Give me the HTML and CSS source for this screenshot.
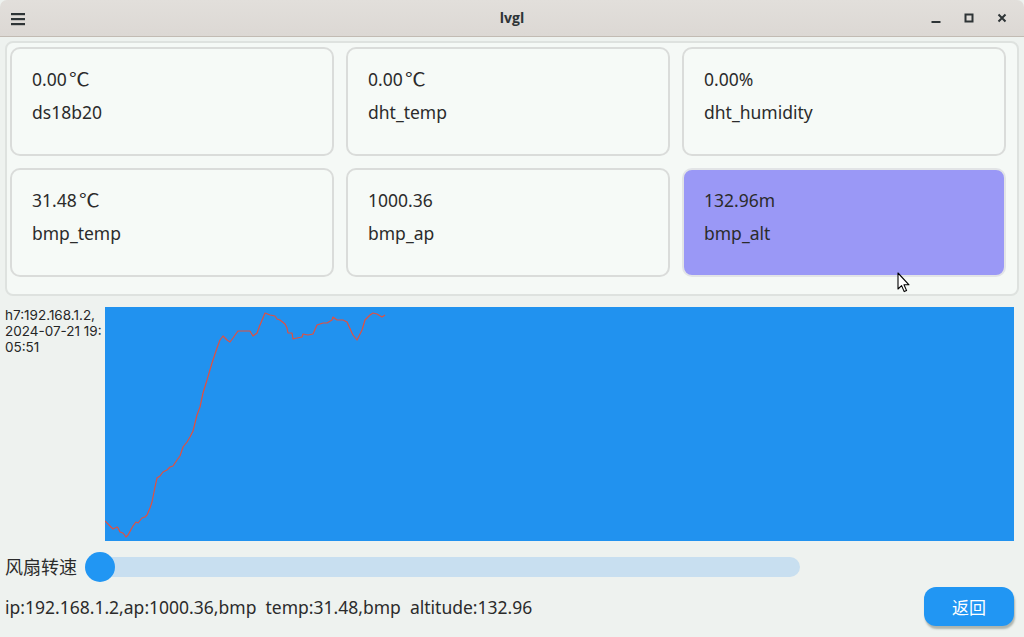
FILE: index.html
```html
<!DOCTYPE html>
<html lang="zh">
<head>
<meta charset="utf-8">
<title>lvgl</title>
<link rel="stylesheet" href="styles.css">
</head>
<body>
<div class="window">
  <header class="titlebar">
    <div class="tb-left">
      <svg class="icon" width="16" height="16" viewBox="0 0 16 16"><rect x="1" y="2" width="14" height="2.2" fill="#2e3436"/><rect x="1" y="7" width="14" height="2.2" fill="#2e3436"/><rect x="1" y="12" width="14" height="2.2" fill="#2e3436"/></svg>
    </div>
    <div class="tb-title">lvgl</div>
    <div class="tb-right">
      <svg class="ctl" width="16" height="16" viewBox="0 0 16 16"><rect x="3.5" y="11" width="9" height="2" fill="#2e3436"/></svg>
      <svg class="ctl" width="16" height="16" viewBox="0 0 16 16"><rect x="4.5" y="4.5" width="7" height="7" fill="none" stroke="#2e3436" stroke-width="2"/></svg>
      <svg class="ctl" width="16" height="16" viewBox="0 0 16 16"><path d="M4.5 4.5 L11.5 11.5 M11.5 4.5 L4.5 11.5" stroke="#2e3436" stroke-width="2"/></svg>
    </div>
  </header>
  <main class="content">
    <section class="panel">
      <div class="card"><div class="val">0.00<span class="unit">℃</span></div><div class="lbl">ds18b20</div></div>
      <div class="card"><div class="val">0.00<span class="unit">℃</span></div><div class="lbl">dht_temp</div></div>
      <div class="card"><div class="val">0.00%</div><div class="lbl">dht_humidity</div></div>
      <div class="card"><div class="val">31.48<span class="unit">℃</span></div><div class="lbl">bmp_temp</div></div>
      <div class="card"><div class="val">1000.36</div><div class="lbl">bmp_ap</div></div>
      <div class="card card-active"><div class="val">132.96m</div><div class="lbl">bmp_alt</div></div>
    </section>
    <section class="chart-row">
      <div class="chart-label">h7:192.168.1.2,<br>2024-07-21 19:<br>05:51</div>
      <div class="chart">
        <svg width="909" height="234" viewBox="105 307 909 234">
          <polyline fill="none" stroke="#e2503f" stroke-width="1.2" stroke-linejoin="round" points="105,521 110,526 113,529 117,527 118,528 120,532 123,533 126,537 128,535 133,526 136,522 138,523 142,518 145,517 147,515 150,508 152,502 155,487 157,478 160,476 163,472 167,470 170,467 173,466 177,460 180,456 183,447 187,442 190,437 193,431 197,415 200,407 203,393 207,380 212,363 217,348 220,340 223,336 227,340 230,342 233,338 238,331 250,331 253,336 257,333 260,325 265,313 270,315 275,316 277,319 280,320 285,324 287,328 288,333 292,333 293,339 297,338 302,337 303,334 308,335 313,334 317,325 323,323 327,323 332,320 333,317 337,320 343,320 347,322 352,333 353,335 357,340 362,330 365,320 370,315 373,313 377,314 382,317 385,315"/>
        </svg>
      </div>
    </section>
    <section class="slider-row">
      <span class="slider-label">风扇转速</span>
      <div class="slider">
        <div class="track"></div>
        <div class="knob"></div>
      </div>
    </section>
    <section class="status-row">
      <span class="status">ip:192.168.1.2,ap:1000.36,bmp&nbsp; temp:31.48,bmp&nbsp; altitude:132.96</span>
      <button class="btn">返回</button>
    </section>
  </main>
  <svg class="cursor" width="14" height="22" viewBox="0 0 14 22"><path d="M1 1 L1 17 L4.6 13.6 L7.2 19.6 L9.6 18.6 L7 12.8 L12 12.8 Z" fill="#fff" stroke="#000" stroke-width="1.1" stroke-linejoin="round"/></svg>
</div>
</body>
</html>
```
FILE: styles.css
```css
* { box-sizing: border-box; }
html, body { margin: 0; padding: 0; }
body {
  width: 1024px;
  height: 637px;
  overflow: hidden;
  background: #eef2ef;
  font-family: "Noto Sans", "Noto Sans CJK SC", sans-serif;
  color: #2b2b2b;
}
.window {
  position: relative;
  width: 1024px;
  height: 637px;
  display: flex;
  flex-direction: column;
}
.titlebar {
  height: 37px;
  flex: none;
  display: flex;
  align-items: center;
  background: linear-gradient(#e2dfdb, #dcd8d4);
  border-bottom: 1px solid #c2bbb3;
  border-radius: 7px 7px 0 0;
  position: relative;
}
.tb-left { padding-left: 10px; display: flex; align-items: center; height: 100%; }
.tb-left .icon { display: block; margin-top: 2px; }
.tb-title {
  position: absolute;
  left: 0; right: 0; top: 0;
  height: 36px;
  line-height: 36px;
  text-align: center;
  font-family: "Open Sans", "Noto Sans", sans-serif;
  font-weight: 700;
  font-size: 14px;
  color: #2e3436;
  pointer-events: none;
}
.tb-right {
  margin-left: auto;
  display: flex;
  gap: 17px;
  padding-right: 14px;
  align-items: center;
}
.ctl { display: block; }

.content {
  flex: 1;
  display: flex;
  flex-direction: column;
  padding: 4px 5px 0 5px;
}
.panel {
  height: 255px;
  background: #f5f9f6;
  border: 2px solid #dee2df;
  border-radius: 8px;
  padding: 4px 3px 0 3px;
  display: grid;
  grid-template-columns: repeat(3, 324px);
  grid-auto-rows: 109px;
  column-gap: 12px;
  row-gap: 12px;
  align-content: start;
}
.card {
  background: #f6faf7;
  border: 2px solid #dadcda;
  border-radius: 10px;
  padding: 19px 20px 0 20px;
  display: flex;
  flex-direction: column;
  gap: 11px;
  font-size: 17.5px;
  line-height: 22px;
  color: #2b2b2b;
}
.val, .lbl { height: 22px; }
.unit {
  display: inline-block;
  font-family: "Noto Sans CJK SC", sans-serif;
  font-variant-east-asian: full-width;
  font-size: 18px;
  line-height: 18px;
  margin-left: 2px;
  transform: scaleX(1.15);
  transform-origin: left center;
}
.card-active {
  background: #9a98f6;
  border-color: #e2e4e6;
}

.chart-row {
  margin-top: 11px;
  display: flex;
  height: 234px;
}
.chart-label {
  width: 100px;
  font-family: "Inter", "Open Sans", sans-serif;
  font-size: 13.5px;
  line-height: 16px;
  color: #262626;
}
.chart {
  width: 909px;
  height: 234px;
  background: #2192ef;
}
.chart svg { display: block; }

.slider-row {
  margin-top: 11px;
  display: flex;
  align-items: center;
  height: 30px;
}
.slider-label {
  font-size: 18px;
  line-height: 30px;
  color: #2b2b2b;
  width: 81px;
}
.slider {
  position: relative;
  width: 714px;
  height: 30px;
}
.track {
  position: absolute;
  left: 0; right: 0; top: 5px;
  height: 20px;
  border-radius: 10px;
  background: #c8dff0;
}
.knob {
  position: absolute;
  left: -1px; top: 0;
  width: 30px; height: 30px;
  border-radius: 50%;
  background: #2196f3;
}

.status-row {
  margin-top: 5px;
  padding-right: 5px;
  display: flex;
  align-items: center;
  height: 39px;
}
.status {
  font-size: 17.5px;
  color: #2b2b2b;
}
.btn {
  margin-left: auto;
  width: 90px;
  height: 39px;
  border: none;
  border-radius: 12px;
  background: #2196f3;
  color: #fff;
  font-family: "Noto Sans CJK SC", sans-serif;
  font-size: 17px;
  box-shadow: 1px 3px 2px rgba(120, 130, 120, 0.55);
}
.cursor {
  position: absolute;
  left: 897px;
  top: 272px;
}
```
